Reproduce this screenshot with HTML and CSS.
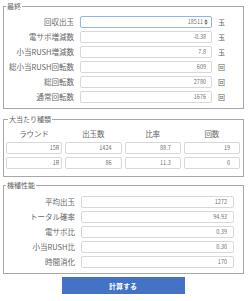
FILE: index.html
```html
<!DOCTYPE html>
<html lang="ja">
<head>
<meta charset="utf-8">
<title>計算</title>
<link rel="stylesheet" href="styles.css">
</head>
<body>
<div class="page">
  <fieldset class="box box-final">
    <legend>最終</legend>
    <div class="grid grid-final">
      <label class="lbl">回収出玉</label>
      <div class="field field-focus"><input class="val" type="text" value="18511" readonly><svg class="spin" width="4" height="6" viewBox="0 0 4 6"><path d="M2 0.3 L3.8 2.6 L0.2 2.6 Z M0.2 3.4 L3.8 3.4 L2 5.7 Z" fill="#666"/></svg></div>
      <span class="unit">玉</span>

      <label class="lbl">電サポ増減数</label>
      <div class="field"><input class="val" type="text" value="-0.38" readonly></div>
      <span class="unit">玉</span>

      <label class="lbl">小当RUSH増減数</label>
      <div class="field"><input class="val" type="text" value="7.8" readonly></div>
      <span class="unit">玉</span>

      <label class="lbl">総小当RUSH回転数</label>
      <div class="field"><input class="val" type="text" value="609" readonly></div>
      <span class="unit">回</span>

      <label class="lbl">総回転数</label>
      <div class="field"><input class="val" type="text" value="2780" readonly></div>
      <span class="unit">回</span>

      <label class="lbl">通常回転数</label>
      <div class="field"><input class="val" type="text" value="1676" readonly></div>
      <span class="unit">回</span>
    </div>
  </fieldset>

  <fieldset class="box box-type">
    <legend>大当たり種類</legend>
    <div class="grid grid-type">
      <span class="head">ラウンド</span>
      <span class="head">出玉数</span>
      <span class="head">比率</span>
      <span class="head">回数</span>

      <div class="field"><input class="val val-tight" type="text" value="15R" readonly></div>
      <div class="field"><input class="val val-num" type="text" value="1424" readonly></div>
      <div class="field"><input class="val val-num" type="text" value="88.7" readonly></div>
      <div class="field"><input class="val val-num" type="text" value="19" readonly></div>

      <div class="field"><input class="val val-tight" type="text" value="1R" readonly></div>
      <div class="field"><input class="val val-num" type="text" value="86" readonly></div>
      <div class="field"><input class="val val-num" type="text" value="11.3" readonly></div>
      <div class="field"><input class="val val-num" type="text" value="0" readonly></div>
    </div>
  </fieldset>

  <fieldset class="box box-spec">
    <legend>機種性能</legend>
    <div class="grid grid-spec">
      <label class="lbl">平均出玉</label>
      <div class="field"><input class="val" type="text" value="1272" readonly></div>

      <label class="lbl">トータル確率</label>
      <div class="field"><input class="val" type="text" value="94.93" readonly></div>

      <label class="lbl">電サポ比</label>
      <div class="field"><input class="val" type="text" value="0.39" readonly></div>

      <label class="lbl">小当RUSH比</label>
      <div class="field"><input class="val" type="text" value="0.30" readonly></div>

      <label class="lbl">時間消化</label>
      <div class="field"><input class="val" type="text" value="170" readonly></div>
    </div>
  </fieldset>

  <div class="actions">
    <button class="btn" type="button">計算する</button>
  </div>
</div>
</body>
</html>
```

FILE: styles.css
```css
html, body {
  margin: 0;
  padding: 0;
  background: #ffffff;
}

body {
  font-family: "Noto Sans CJK JP", "Noto Sans", sans-serif;
  color: #666666;
  font-size: 8px;
}

.page {
  padding: 2px 4px 0 3px;
}

.box {
  margin: 0;
  padding: 0;
  border: 1px solid #a8a8a8;
  min-width: 0;
}

.box legend {
  font-size: 7px;
  line-height: 9px;
  padding: 0 1px;
  margin-left: 2px;
  color: #666666;
}

.box-final {
  padding-bottom: 5px;
}

.box-type {
  margin-top: 6px;
  padding: 0 3px 7px 2px;
}

.box-spec {
  margin-top: 4px;
  padding-bottom: 5px;
}

.grid {
  display: grid;
  row-gap: 3px;
  align-items: center;
}

.grid-final {
  margin-top: 5px;
  grid-template-columns: 70px 132px 14px;
  column-gap: 6px;
}

.grid-type {
  margin-top: 5px;
  grid-template-columns: repeat(4, 1fr);
  column-gap: 3px;
}

.grid-spec {
  margin-top: 6px;
  grid-template-columns: 71px 153px;
  column-gap: 6px;
}

.lbl {
  text-align: right;
  white-space: nowrap;
  font-size: 7.5px;
  line-height: 12px;
  color: #666666;
}

.unit {
  font-size: 7px;
  line-height: 12px;
  color: #666666;
  text-align: left;
}

.head {
  text-align: center;
  font-size: 7.5px;
  line-height: 10px;
  color: #666666;
}

.field {
  display: flex;
  align-items: center;
  height: 12px;
  box-sizing: border-box;
  border: 1px solid #d8d8d8;
  border-radius: 2px;
  background: #ffffff;
  min-width: 0;
}

.field-focus {
  border-color: #8fb6e4;
  padding-right: 3px;
}

.val {
  flex: 1;
  min-width: 0;
  width: 100%;
  height: 10px;
  border: 0;
  padding: 0 5px 0 0;
  margin: 0;
  background: transparent;
  font-family: "Noto Sans CJK JP", "Noto Sans", sans-serif;
  font-size: 5.5px;
  line-height: 10px;
  color: #707070;
  text-align: right;
  outline: none;
}

.field-focus .val {
  padding-right: 1px;
}

.spin {
  display: block;
  flex: none;
}

.val-tight {
  padding-right: 2px;
}

.val-num {
  padding-right: 9px;
}

.grid-spec .val {
  padding-right: 6px;
}

.actions {
  display: flex;
  justify-content: center;
  margin-top: 3px;
}

.btn {
  width: 123px;
  height: 17px;
  border: 0;
  border-radius: 0;
  background: #4472c4;
  color: #ffffff;
  font-family: "Noto Sans CJK JP", "Noto Sans", sans-serif;
  font-size: 7px;
  font-weight: bold;
  padding: 0;
  margin-left: -1px;
}
```
